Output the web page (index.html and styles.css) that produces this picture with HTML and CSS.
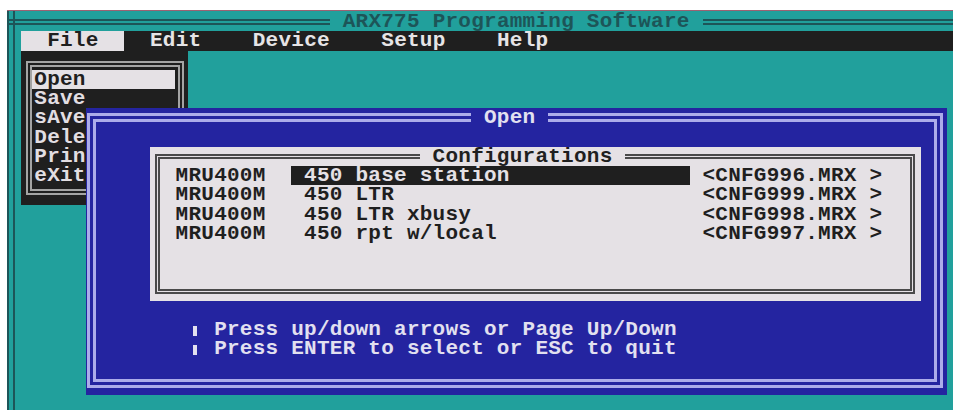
FILE: index.html
```html
<!DOCTYPE html>
<html lang="en">
<head>
<meta charset="utf-8">
<title>ARX775 Programming Software</title>
<link rel="stylesheet" href="styles.css">
</head>
<body>
<div class="screen">
  <div class="title-row">
    <div class="rule rule-lead"></div>
    <span class="app-title"> ARX775 Programming Software </span>
    <div class="rule rule-tail"></div>
  </div>

  <div class="menubar"><span class="menu-item is-open">  File  </span><span class="menu-item">  Edit    </span><span class="menu-item">Device    </span><span class="menu-item">Setup    </span><span class="menu-item">Help</span></div>

  <!-- File menu, dropped open -->
  <div class="dropdown">
    <div class="dropdown-frame">
      <div class="dropdown-item is-current">Open</div>
      <div class="dropdown-item">Save</div>
      <div class="dropdown-item">sAve</div>
      <div class="dropdown-item">Delete</div>
      <div class="dropdown-item">Print</div>
      <div class="dropdown-item">eXit</div>
    </div>
  </div>

  <!-- Open dialog -->
  <div class="dialog">
    <div class="dialog-frame">
      <div class="dialog-title"><span class="caption"> Open </span></div>

      <div class="listbox">
        <div class="list-frame">
          <div class="list-title"><span class="caption"> Configurations </span></div>
          <div class="list-row">
            <span class="model">MRU400M</span>
            <span class="desc is-selected">450 base station</span>
            <span class="file">&lt;CNFG996.MRX &gt;</span>
          </div>
          <div class="list-row">
            <span class="model">MRU400M</span>
            <span class="desc">450 LTR</span>
            <span class="file">&lt;CNFG999.MRX &gt;</span>
          </div>
          <div class="list-row">
            <span class="model">MRU400M</span>
            <span class="desc">450 LTR xbusy</span>
            <span class="file">&lt;CNFG998.MRX &gt;</span>
          </div>
          <div class="list-row">
            <span class="model">MRU400M</span>
            <span class="desc">450 rpt w/local</span>
            <span class="file">&lt;CNFG997.MRX &gt;</span>
          </div>
        </div>
      </div>

      <div class="hints">
        <div class="hint"><span class="bullet"></span> Press up/down arrows or Page Up/Down</div>
        <div class="hint"><span class="bullet"></span> Press ENTER to select or ESC to quit</div>
      </div>
    </div>
  </div>
</div>
</body>
</html>
```

FILE: styles.css
```css
/* Text-mode screen: every cell is one character column wide and one row tall */
:root {
  --cw: 12.85px;
  --rh: 19.25px;
  --teal: #21a09c;
  --teal-dark: #1d5558;
  --ink: #1f1f1f;
  --paper: #e5e1e5;
  --blue: #2424a0;
  --lavender: #acacea;
  --pale: #e2e0f0;
}

* {
  box-sizing: border-box;
}

html,
body {
  margin: 0;
  background: #ffffff;
}

body {
  font-family: "Liberation Mono", "Courier New", monospace;
  font-weight: bold;
  font-size: 21px;
  letter-spacing: 0.248px;
  line-height: var(--rh);
}

/* Desktop background with the double rule down the left edge */
.screen {
  position: relative;
  margin: 10px 0 0 7px;
  height: 400px;
  padding-top: 1px;
  border-top: 1px solid #9c6272;
  background: var(--teal);
  overflow: hidden;
  box-shadow:
    inset 2px 0 0 var(--teal-dark),
    inset 6px 0 0 var(--teal),
    inset 8px 0 0 var(--teal-dark);
}

/* Program title on the top double rule */
.title-row {
  display: flex;
  align-items: center;
  height: var(--rh);
}

.rule {
  height: 6px;
  border-top: 2px solid var(--teal-dark);
  border-bottom: 2px solid var(--teal-dark);
}

.rule-lead {
  flex: 0 0 322.85px;
}

.rule-tail {
  flex: 1;
}

.app-title {
  height: var(--rh);
  white-space: pre;
  color: var(--teal-dark);
}

/* Captions sitting on a frame line: exactly one text row tall */
.caption {
  display: inline-block;
  height: var(--rh);
  vertical-align: top;
}

/* Menu bar */
.menubar {
  display: flex;
  margin-left: 14.45px;
  height: var(--rh);
  background: var(--ink);
  color: #e6e4e6;
  white-space: pre;
}

.menu-item {
  height: var(--rh);
}

.menu-item.is-open {
  background: var(--paper);
  color: var(--ink);
}

/* File menu */
.dropdown {
  position: absolute;
  left: 14.45px;
  top: 39.5px;
  width: 167.05px;
  height: 154px;
  padding: 10px 4px 10px 4.5px;
  background: var(--ink);
}

.dropdown-frame {
  height: 100%;
  padding: 3.25px 3.5px 3.25px 0;
  border: 6px double #a4a4a4;
}

.dropdown-item {
  height: var(--rh);
  padding-left: 2.35px;
  color: #e2dee2;
  white-space: pre;
}

.dropdown-item.is-current {
  background: var(--paper);
  color: var(--ink);
}

/* Open dialog */
.dialog {
  position: absolute;
  left: 78.7px;
  top: 97.25px;
  width: 860.95px;
  height: 286.75px;
  padding: 5px 3.5px 7px 1.3px;
  background: var(--blue);
}

.dialog-frame {
  height: 100%;
  border: 9px double var(--lavender);
}

.dialog-title {
  height: var(--rh);
  margin-top: -14px;
  padding-left: 375.2px;
  white-space: pre;
  color: var(--pale);
}

.dialog-title .caption {
  background: var(--blue);
}

/* Configuration list */
.listbox {
  width: 771.05px;
  height: 154px;
  margin: 19.25px 0 0 53.95px;
  padding: 7px 6px 7px 5px;
  background: var(--paper);
  color: var(--ink);
}

.list-frame {
  height: 100%;
  border: 5px double #4a4a4a;
}

.list-title {
  height: var(--rh);
  margin-top: -12px;
  padding-left: 259.85px;
  white-space: pre;
}

.list-title .caption {
  background: var(--paper);
}

.list-row {
  display: grid;
  grid-template-columns: calc(var(--cw) * 9) calc(var(--cw) * 31) var(--cw) auto;
  height: var(--rh);
  padding-left: 15.7px;
  white-space: pre;
}

.list-row .desc {
  grid-column: 2;
  padding-left: var(--cw);
}

.list-row .file {
  grid-column: 4;
}

.desc.is-selected {
  background: var(--ink);
  color: var(--paper);
}

/* Key hints */
.hints {
  margin-top: 19.25px;
  padding-left: 92.5px;
  color: var(--pale);
}

.hint {
  height: var(--rh);
  white-space: pre;
}

.bullet {
  display: inline-block;
  width: 4px;
  height: 10px;
  margin: 0 4.4px 0 4.45px;
  background: currentColor;
  vertical-align: -1px;
}
```
